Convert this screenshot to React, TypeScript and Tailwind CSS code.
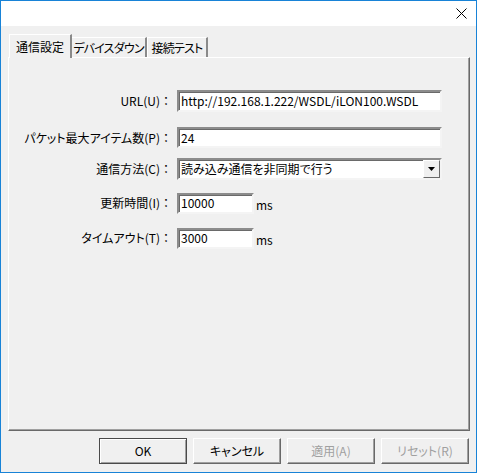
import React from "react"

const font = { fontFamily: '"Noto Sans CJK JP", "Liberation Sans", sans-serif' }

const sunken =
    "bg-white border-2 border-t-[#8c8c8c] border-l-[#8c8c8c] border-b-[#f4f4f4] border-r-[#f4f4f4] shadow-[inset_1px_1px_0_#6a6a6a] px-[2px] text-[12px] leading-none text-black flex items-center"

const Row = ({ label, mt, children }: { label: string; mt: string; children: React.ReactNode }) => (
    <div className={`flex items-center ${mt}`}>
        <div className="w-[163px] text-right text-[12px] text-black whitespace-nowrap">
            {label}
            <span className="[font-feature-settings:normal]">：</span>
        </div>
        <div className="ml-[5px] flex items-center">{children}</div>
    </div>
)

const Tab = ({ label, active, w }: { label: string; active?: boolean; w: string }) =>
    active ? (
        <div className={`relative z-10 -mb-px h-[24px] ${w} -mr-[1px] bg-[#f0f0f0] border-l border-t border-white border-r-2 border-r-[#8a8a8a] flex items-center justify-center text-[12px] text-black`}>
            {label}
        </div>
    ) : (
        <div className={`h-[20px] ${w} bg-[#f0f0f0] border-l border-t border-white border-r-2 border-r-[#8a8a8a] flex items-center justify-center text-[12px] tracking-[-0.8px] text-black whitespace-nowrap`}>
            {label}
        </div>
    )

const Button = ({ label, primary, disabled }: { label: string; primary?: boolean; disabled?: boolean }) => (
    <button
        className={`w-[88px] h-[26px] text-[12px] bg-[#f0f0f0] ${
            primary
                ? "border border-[#4a4a4a] shadow-[inset_1px_1px_0_#fff,inset_-1px_-1px_0_#a0a0a0]"
                : "border border-t-white border-l-white border-b-[#696969] border-r-[#696969] shadow-[inset_-1px_-1px_0_#a0a0a0]"
        } ${disabled ? "text-[#a0a0a0]" : "text-black"}`}
    >
        {label}
    </button>
)

const SettingsDialog = () => {
    return (
        <div className="w-[477px] h-[473px] border border-[#1883d7] bg-[#f0f0f0] flex flex-col [font-feature-settings:'palt']" style={font}>
            {/* title bar */}
            <div className="h-[25px] bg-white flex justify-end items-center pr-[9px]">
                <svg width="11" height="11" viewBox="0 0 11 11">
                    <path d="M0.5 0.5 L10.5 10.5 M10.5 0.5 L0.5 10.5" stroke="#000" strokeWidth="1" />
                </svg>
            </div>

            {/* tabs */}
            <div className="flex items-end ml-[8px] mt-[8px]">
                <Tab label="通信設定" active w="w-[63px]" />
                <Tab label="デバイスダウン" w="w-[76px]" />
                <Tab label="接続テスト" w="w-[61px]" />
            </div>

            {/* panel */}
            <div className="ml-[7px] w-[462px] h-[374px] border-l border-t border-white border-r border-b border-r-[#696969] border-b-[#696969] shadow-[inset_-1px_-1px_0_#a0a0a0] flex flex-col">
                <Row label="URL(U)" mt="mt-[32px]">
                    <div className={`${sunken} w-[265px] h-[22px]`}>http://192.168.1.222/WSDL/iLON100.WSDL</div>
                </Row>
                <Row label="パケット最大アイテム数(P)" mt="mt-[15px]">
                    <div className={`${sunken} w-[265px] h-[21px]`}>24</div>
                </Row>
                <Row label="通信方法(C)" mt="mt-[10px]">
                    <div className={`${sunken} w-[265px] h-[22px] justify-between pr-0`}>
                        <span>読み込み通信を非同期で行う</span>
                        <div className="w-[17px] h-[18px] bg-[#f0f0f0] border border-t-white border-l-white border-b-[#696969] border-r-[#696969] flex items-center justify-center">
                            <svg width="7" height="4" viewBox="0 0 7 4">
                                <path d="M0 0 H7 L3.5 4 Z" fill="#000" />
                            </svg>
                        </div>
                    </div>
                </Row>
                <Row label="更新時間(I)" mt="mt-[12px]">
                    <div className={`${sunken} w-[77px] h-[21px]`}>10000</div>
                    <span className="ml-[2px] mt-[4px] text-[12px] text-black">ms</span>
                </Row>
                <Row label="タイムアウト(T)" mt="mt-[13px]">
                    <div className={`${sunken} w-[77px] h-[21px]`}>3000</div>
                    <span className="ml-[2px] mt-[4px] text-[12px] text-black">ms</span>
                </Row>
            </div>

            {/* buttons */}
            <div className="flex justify-end gap-[6px] mt-[7px] mr-[7px]">
                <Button label="OK" primary />
                <Button label="キャンセル" />
                <Button label="適用(A)" disabled />
                <Button label="リセット(R)" disabled />
            </div>
        </div>
    )
}

export default function App() {
    return <SettingsDialog />
}
